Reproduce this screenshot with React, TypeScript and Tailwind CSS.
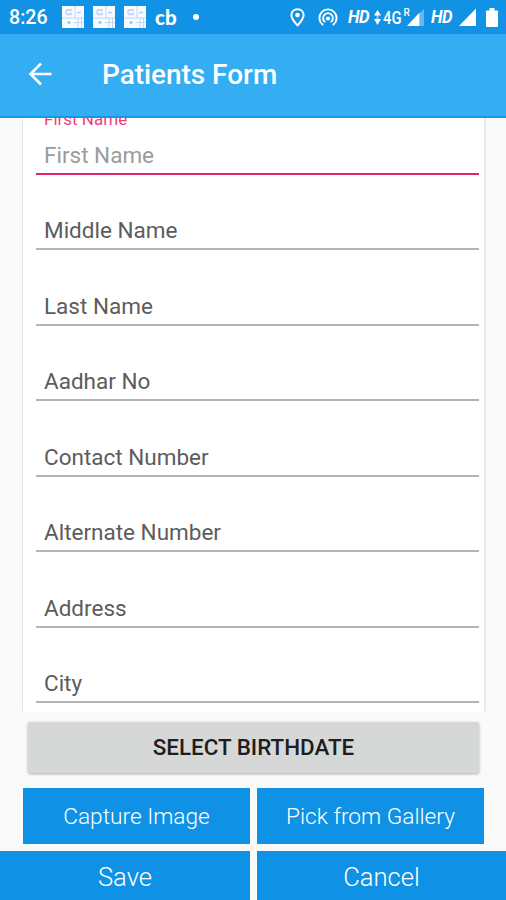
import clsx from 'clsx';

const FIELDS = [
  'Middle Name',
  'Last Name',
  'Aadhar No',
  'Contact Number',
  'Alternate Number',
  'Address',
  'City',
];

function AppIcon() {
  return (
    <svg width="22" height="22" viewBox="0 0 22 22" fill="none">
      <rect width="22" height="22" fill="#f7fbff" />
      <path d="M0 12H22M13 0V12M16 12V22M19.500 12V22M12 16.500H22" stroke="#c3d6f6" strokeWidth="1" />
      <path d="M10 4H5.500Q4 4 4 5.500V7Q4 8.500 5.500 8.500H9V6.500M15 6.500H19" stroke="#b5cdf3" strokeWidth="1.300" />
      <circle cx="7" cy="16.500" r="1.400" fill="#9cc0f0" />
    </svg>
  );
}

function StatusBar() {
  return (
    <div className="flex h-[34px] shrink-0 items-center bg-[#1192e4] pl-[9px] pr-[8px] text-white">
      <span className="w-[53px] whitespace-nowrap pt-[2px] text-[19.6px] font-medium leading-none">8:26</span>
      <div className="flex w-[93px] gap-[9px]">
        <AppIcon />
        <AppIcon />
        <AppIcon />
      </div>
      <span className="w-[38px] font-['Lato'] text-[20.5px] font-black leading-none">cb</span>
      <span className="size-[6px] rounded-full bg-white" />

      <svg className="ml-auto" width="15" height="19" viewBox="0 0 14 18" fill="none">
        <path d="M7 1.200C3.600 1.200 1.200 3.600 1.200 6.700C1.200 10.500 7 16.500 7 16.500S12.800 10.500 12.800 6.700C12.800 3.600 10.400 1.200 7 1.200Z" stroke="white" strokeWidth="1.900" />
        <circle cx="7" cy="6.700" r="2.200" fill="white" />
      </svg>
      <svg className="ml-[13px]" width="20" height="18" viewBox="0 0 20 18" fill="none" stroke="white" strokeWidth="1.900" strokeLinecap="round">
        <path d="M4.500 16.600A8.600 8.600 0 1 1 15.500 16.600" />
        <path d="M6.600 13.600A4.900 4.900 0 1 1 13.400 13.600" />
        <circle cx="10" cy="10.500" r="2.100" fill="white" stroke="none" />
      </svg>
      <span className="ml-[10px] w-[26px] origin-left scale-x-[0.93] text-[18px] font-bold italic leading-none tracking-[-0.5px]">HD</span>
      <svg width="7" height="15" viewBox="0 0 7 15" fill="white">
        <path d="M3.500 0L7 5.500H0ZM3.500 15L0 9H7Z" />
        <path d="M2.500 5H4.500V10H2.500Z" opacity="0.500" />
      </svg>
      <span className="ml-[2px] w-[19px] origin-left scale-x-[0.82] pt-px text-[18px] font-medium leading-none">4G</span>
      <svg className="ml-[2px]" width="20" height="20" viewBox="0 0 20 20">
        <path d="M15.500 6.500L20 2V19H15.500Z" fill="white" opacity="0.350" />
        <path d="M15.500 5.500V19H3Z" fill="white" />
        <text x="-0.5" y="8.500" fill="white" fontFamily="Roboto, sans-serif" fontSize="10" fontWeight="500">R</text>
      </svg>
      <span className="ml-[7px] w-[28px] origin-left scale-x-[0.93] text-[18px] font-bold italic leading-none tracking-[-0.5px]">HD</span>
      <svg width="17" height="18" viewBox="0 0 17 18" fill="white">
        <path d="M17 0.500V18H0Z" />
      </svg>
      <svg className="ml-[10px]" width="12" height="19" viewBox="0 0 12 19" fill="white">
        <path d="M3.500 0H8.500V2.500H11Q12 2.500 12 3.500V18Q12 19 11 19H1Q0 19 0 18V3.500Q0 2.500 1 2.500H3.500Z" />
      </svg>
    </div>
  );
}

function Toolbar() {
  return (
    <header className="flex h-[84px] shrink-0 items-center border-b-2 border-[#109be9] bg-[#35adf2] pl-[28px] text-white">
      <svg width="24" height="24" viewBox="0 0 24 24" fill="none" stroke="white" strokeWidth="2.600">
        <path d="M23.500 11H3M13 0.500L2.500 11L13 21.500" />
      </svg>
      <h1 className="ml-[50px] text-[27.9px] font-medium leading-none">Patients Form</h1>
    </header>
  );
}

function Field({ label, active = false }: { label: string; active?: boolean }) {
  return (
    <div
      className={clsx(
        'flex h-[75.5px] flex-col justify-end border-b-2 pl-[8px]',
        active ? 'border-[#e0246f]' : 'border-[#b3b3b3]'
      )}
    >
      {active && (
        <span className="mb-[13px] text-[17px] leading-[20px] text-[#ee3f82]">{label}</span>
      )}
      <span
        className={clsx(
          'pb-[5px] text-[22.5px] leading-[26px]',
          active ? 'text-[#9b9b9b]' : 'text-[#5c5c5c]'
        )}
      >
        {label}
      </span>
    </div>
  );
}

const actionButton =
  'flex items-center justify-center bg-[#0f92e5] pt-[3px] font-light text-white';

export default function App() {
  return (
    <div className="flex h-[900px] w-[506px] flex-col overflow-hidden bg-[#fafafa] font-['Roboto',sans-serif]">
      <StatusBar />
      <Toolbar />

      <main className="h-[733px] shrink-0 overflow-hidden px-[23px]">
        <div className="-ml-px -mr-[2px] -mt-[18.7px] h-[613.7px] rounded-[2px] border-x border-[#e6e6e6] bg-white pl-[13px] pr-[5px] shadow-[1px_0_1px_#eeeeee]">
          <Field label="First Name" active />
          {FIELDS.map((label) => (
            <Field key={label} label={label} />
          ))}
        </div>
        <button className="ml-[5px] mt-[9px] flex h-[51px] w-[451px] items-center justify-center rounded-[2px] bg-[#d6d7d7] pt-px text-[22.4px] font-medium text-[#1e1e1e] shadow-[0_1px_3px_#00000050]">
          SELECT BIRTHDATE
        </button>
        <div className="mt-[15px] grid h-[56px] w-[461px] grid-cols-[227px_227px] gap-[7px] text-[22.7px]">
          <button className={actionButton}>Capture Image</button>
          <button className={actionButton}>Pick from Gallery</button>
        </div>
      </main>

      <footer className="grid h-[49px] shrink-0 grid-cols-[250px_249px] gap-[7px] text-[25.6px]">
        <button className={actionButton}>Save</button>
        <button className={actionButton}>Cancel</button>
      </footer>
    </div>
  );
}
